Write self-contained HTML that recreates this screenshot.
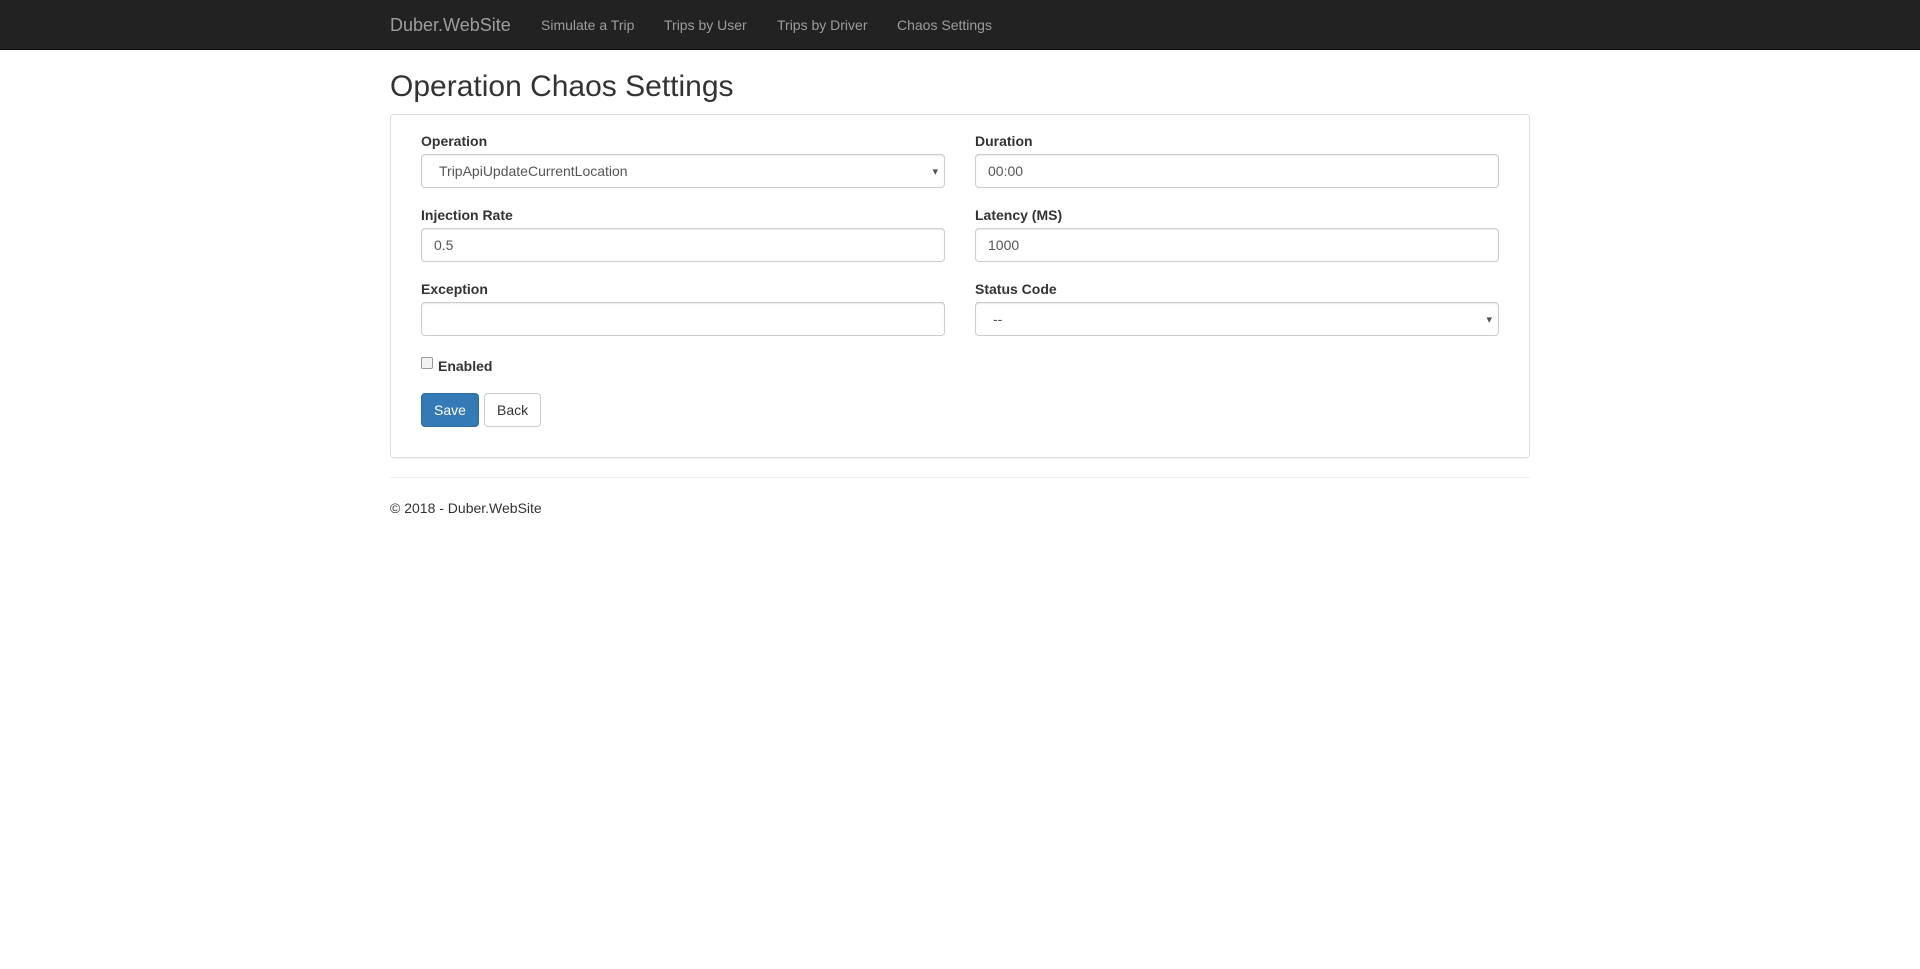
<!DOCTYPE html>
<html><head><meta charset="utf-8"><style>
*{box-sizing:border-box}
body{margin:0;font-family:"Liberation Sans",Arial,sans-serif;font-size:14px;line-height:20px;color:#333;background:#fff}
.nav{height:50px;background:#222;border-bottom:1px solid #080808}
.c{width:1140px;margin-left:390px;position:relative}
.main{margin-top:-50px}
.brand{position:absolute;left:0;top:15px;font-size:18px;color:#9d9d9d;line-height:20px}
.nav a{position:absolute;top:15px;color:#9d9d9d;text-decoration:none}
h2{font-size:30px;font-weight:500;margin:0;position:absolute;top:70px;line-height:33px}
.panel{position:absolute;top:114px;left:0;width:1140px;height:344px;border:1px solid #ddd;border-radius:4px;box-shadow:0 1px 1px rgba(0,0,0,.05)}
label{position:absolute;font-weight:bold}
.in{position:absolute;width:524px;height:34px;border:1px solid #ccc;border-radius:4px;box-shadow:inset 0 1px 1px rgba(0,0,0,.075);padding:6px 12px;color:#555}
.sel{padding-left:17px}
.sel:after{content:"▾";position:absolute;right:6px;top:7px;font-size:11px;color:#555}
.cb{position:absolute;width:12px;height:12px;border:1px solid #999;border-radius:2px;background:#f3f3f3}
.btn{position:absolute;height:34px;padding:6px 12px;border-radius:4px;border:1px solid #ccc}
hr{position:absolute;top:477px;left:0;width:1140px;margin:0;border:0;border-top:1px solid #eee}
.ft{position:absolute;top:498px;left:0}
</style></head><body>
<div class="nav"><div class="c">
<span class="brand">Duber.WebSite</span>
<a style="left:151px">Simulate a Trip</a>
<a style="left:274px">Trips by User</a>
<a style="left:387px">Trips by Driver</a>
<a style="left:507px">Chaos Settings</a>
</div></div>
<div class="c main">
<h2>Operation Chaos Settings</h2>
<div class="panel">
<label style="left:30px;top:16px">Operation</label>
<div class="in sel" style="left:30px;top:39px">TripApiUpdateCurrentLocation</div>
<label style="left:584px;top:16px">Duration</label>
<div class="in" style="left:584px;top:39px">00:00</div>
<label style="left:30px;top:90px">Injection Rate</label>
<div class="in" style="left:30px;top:113px">0.5</div>
<label style="left:584px;top:90px">Latency (MS)</label>
<div class="in" style="left:584px;top:113px">1000</div>
<label style="left:30px;top:164px">Exception</label>
<div class="in" style="left:30px;top:187px"></div>
<label style="left:584px;top:164px">Status Code</label>
<div class="in sel" style="left:584px;top:187px">--</div>
<div class="cb" style="left:30px;top:242px"></div>
<label style="left:47px;top:241px">Enabled</label>
<div class="btn" style="left:30px;top:278px;width:58px;background:#337ab7;border-color:#2e6da4;color:#fff">Save</div>
<div class="btn" style="left:93px;top:278px;width:57px;background:#fff">Back</div>
</div>
<hr>
<div class="ft">© 2018 - Duber.WebSite</div>
</div>
</body></html>
